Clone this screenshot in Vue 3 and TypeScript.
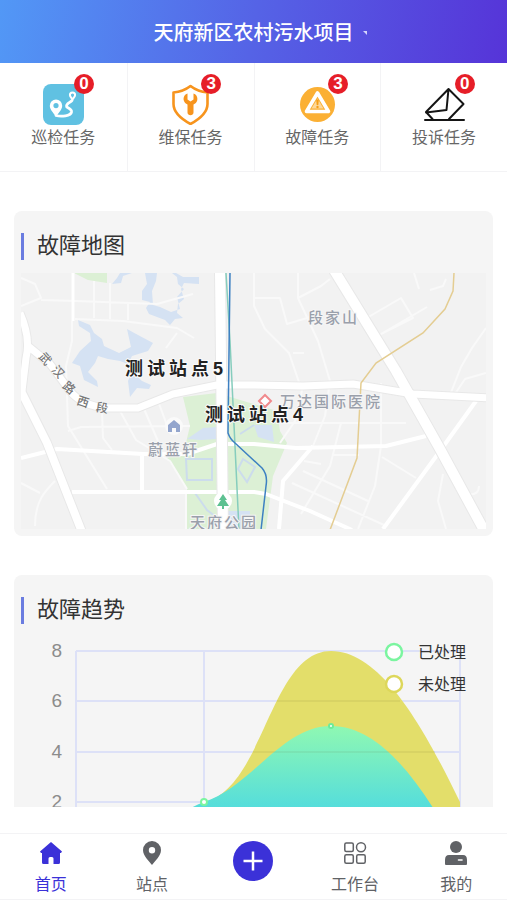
<script setup lang="ts">
import { ref } from 'vue'

type IconName = 'route' | 'repair' | 'warning' | 'mail'

interface Task {
  icon: IconName
  label: string
  count: number
}

interface Tab {
  id: string
  label: string
}

const tasks: Task[] = [
  { icon: 'route', label: '巡检任务', count: 0 },
  { icon: 'repair', label: '维保任务', count: 3 },
  { icon: 'warning', label: '故障任务', count: 3 },
  { icon: 'mail', label: '投诉任务', count: 0 },
]

const tabs: Tab[] = [
  { id: 'home', label: '首页' },
  { id: 'station', label: '站点' },
  { id: 'add', label: '' },
  { id: 'work', label: '工作台' },
  { id: 'mine', label: '我的' },
]

const active = ref('home')

const roadName = [
  { ch: '武', x: 45, y: 358, r: 48 },
  { ch: '汉', x: 58, y: 371, r: 48 },
  { ch: '路', x: 69, y: 387, r: 40 },
  { ch: '西', x: 83, y: 401, r: 18 },
  { ch: '段', x: 102, y: 407, r: 8 },
]

const ticks = [
  { value: 8, y: 650 },
  { value: 6, y: 700 },
  { value: 4, y: 751 },
  { value: 2, y: 801 },
]

const columns = [76, 204, 331, 460]

const legend = [
  { name: '已处理', color: '#7bf5a0', y: 651 },
  { name: '未处理', color: '#ddd75a', y: 683 },
]
</script>

<template>
  <div class="page">
    <header class="header">
      <h1 class="title">天府新区农村污水项目</h1>
      <svg class="caret" width="6" height="6" viewBox="0 0 6 6" aria-hidden="true">
        <path d="M1 1H5V5Z" fill="#d4d4fa" />
      </svg>
    </header>

    <main class="content">
      <nav class="tasks">
        <a v-for="task in tasks" :key="task.label" href="#" class="task">
          <span class="task-icon">
            <svg v-if="task.icon === 'route'" viewBox="0 0 41 41" aria-hidden="true">
              <rect width="41" height="41" rx="8" fill="#60c1e2" />
              <path fill-rule="evenodd" d="M13 15.500a6.200 6.200 0 0 1 6.200 6.200c0 4-3.700 7-6.200 11-2.500-4-6.200-7-6.200-11a6.200 6.200 0 0 1 6.200-6.200ZM13 19a2.600 2.600 0 1 0 0 5.200 2.600 2.600 0 0 0 0-5.200Z" fill="#fff" />
              <path d="M13 31.500c5 1.500 15 .5 15.500-3.500.5-5-8-3.500-4-8 1-1.200 3-2 4.500-3.500" fill="none" stroke="#fff" stroke-width="2.800" stroke-linecap="round" />
              <path d="M29.500 8.500a2.600 2.600 0 0 1 2.600 2.600c0 1.600-1.500 2.800-2.600 4.400-1.100-1.600-2.600-2.800-2.600-4.400a2.600 2.600 0 0 1 2.600-2.600Z" fill="none" stroke="#fff" stroke-width="2" />
            </svg>
            <svg v-else-if="task.icon === 'repair'" viewBox="0 0 41 41" aria-hidden="true">
              <path d="M20.500 2C16 5.500 9.500 8 3.500 8.500V20c0 8 6 14 17 20C31.500 34 37.500 28 37.500 20V8.500C31.500 8 25 5.500 20.500 2Z" fill="none" stroke="#f7941d" stroke-width="2.600" stroke-linejoin="round" />
              <path d="M17.500 9.500C14.500 10.500 13 13.500 13.800 16.500c.5 2 1.900 3.300 3.700 4V28.500c0 3.600 6 3.600 6 0V20.500c1.800-.7 3.200-2 3.700-4 .8-3-.7-6-3.700-7v6L20.500 17.500 17.500 15.500Z" fill="#f7941d" />
            </svg>
            <svg v-else-if="task.icon === 'warning'" viewBox="0 0 41 41" aria-hidden="true">
              <circle cx="20.500" cy="20.500" r="17.500" fill="#fbb034" />
              <path d="M20.500 9 31.500 27.500H9.500Z" fill="none" stroke="#fff" stroke-width="3.600" stroke-linejoin="round" />
              <path d="M20.500 14.500 26.500 24.500H14.500Z" fill="#fff" fill-opacity=".5" />
              <path d="M19.200 15.500h2.600l-.5 5.500h-1.600Z" fill="#f59e16" />
              <circle cx="20.500" cy="23" r="1.200" fill="#f59e16" />
            </svg>
            <svg v-else viewBox="0 0 41 41" aria-hidden="true">
              <path d="M1 36H40M8.500 35 2 28 24.500 5 39.500 20 25 35M2 28.500 22.500 26 24.500 5" fill="none" stroke="#151515" stroke-width="2" stroke-linejoin="round" stroke-linecap="round" />
            </svg>
            <span class="badge">{{ task.count }}</span>
          </span>
          <span>{{ task.label }}</span>
        </a>
      </nav>

      <section class="card">
        <h2 class="card-title">故障地图</h2>
        <svg class="map" viewBox="21 272 465 256" role="img" aria-label="故障地图">
          <rect x="21" y="272" width="465" height="256" fill="#f2f2f2" />

          <g fill="#dcf0d5">
            <path d="M74 272H107V282L88 279Z" />
            <path d="M183 396 217 392 277 410 280 430 287 442 273 475 266 528H187V487L167 457 184 450 190 425Z" />
          </g>
          <g fill="#d5e2f3">
            <path d="M120 272H132L123 275 121 282 112 283 117 277ZM145 272H157L156 280 152 290 153 304 160 306 171 311 180 308 177 296 184 288 178 283 177 276 172 272H176L183 276 199 276V283L184 282 181 288 184 298 178 303 177 312 183 317 175 318 170 324 165 319 149 313 146 307 150 301 142 299V290L147 283Z" />
            <path d="M78 319 90 324 94 332 102 338 104 345 119 352 131 346 127 328 138 334 153 342 148 350 132 355 128 363 120 360 108 358 98 355 95 362 88 371 97 380 98 386 84 379 80 365 72 362 80 350 91 340 90 332 79 325Z" />
            <path d="M132 371 142 380 151 384 149 388 137 387 130 396 128 380Z" />
            <path d="M187 438 203 427 217 426V438L201 439ZM227 510H250V528H227ZM254 424H272L274 441 258 436Z" />
          </g>
          <path d="M186 458H212V479H187ZM195 492 207 509 216 516M243 458 255 466 247 481 238 468ZM240 433 254 424" fill="none" stroke="#ccdcec" stroke-width="2" />

          <!-- minor streets -->
          <g fill="none" stroke="#f9f9f9" stroke-width="2" stroke-linejoin="round">
            <path d="M21 277 35 283 41 297 21 305M41 299 76 300 157 303 193 293M94 280V317M110 282V318M128 303V319M75 318 123 320 177 327 194 337M177 332 166 347" />
            <path d="M72 320V340L66 365 68 425 107 488M68 430 81 426 190 425M102 410 103 437 112 449M120 410 136 439 170 460 187 488M144 408 158 440M158 400 168 427M186 490V528M35 525C35 500 45 490 55 480M21 482 40 492" />
            <path d="M254 272V305L265 328 289 352 302 390M298 272V297L318 340 330 380 325 415 313 445M253 297H280L287 323 317 314M298 297 321 285 330 278" />
            <path d="M365 318 401 297 413 317 381 333 427 306M486 327 472 347 461 366M293 352H304M414 272 419 288M430 289 443 285 446 278" />
            <path d="M381 382V445L375 485 358 528M281 422H406M303 385 295 420 280 442M341 422 330 465 301 513M304 460 321 463M332 454H359M303 470 368 500M292 482 384 524M382 456 416 477M461 366 450 394M486 372 465 378 455 393M443 473 438 500 446 528M465 493C477 495 479 490 479 485" />
          </g>
          <g fill="none" stroke="#fff" stroke-width="4" stroke-linejoin="round">
            <path d="M21 457 57 448 143 453H187L217 443H254L296 447 386 445 426 435M72 491H254L266 493 310 510 352 529M142 453V491M313 445 283 480 279 528M476 400 440 450 383 528" />
            <path d="M73 272V320" stroke-width="3" />
          </g>

          <!-- arterial roads -->
          <g fill="none" stroke="#e8e8e8" stroke-linejoin="round">
            <path d="M21 390 47 442 82 531" stroke-width="10" />
            <path d="M20 312Q31 337 26 357L22 390M28 345 50 363 70 390Q82 405 107 407H138L173 393 217 384H254L303 385 353 383 413 393 489 397" stroke-width="9" />
            <path d="M334 269 396 370 440 448 485 531M220 271 223 530" stroke-width="12" />
          </g>
          <g fill="none" stroke="#fff" stroke-linejoin="round">
            <path d="M21 390 47 442 82 531" stroke-width="8" />
            <path d="M20 312Q31 337 26 357L22 390M28 345 50 363 70 390Q82 405 107 407H138L173 393 217 384H254L303 385 353 383 413 393 489 397" stroke-width="7" />
            <path d="M334 269 396 370 440 448 485 531M220 271 223 530" stroke-width="10" />
          </g>

          <path d="M454 272 453 290 445 308 423 332 376 362 361 382 357 457 330 529" fill="none" stroke="#e4cd92" stroke-width="1.500" />
          <path d="M226 272 230 340 239 529" fill="none" stroke="#86cdbd" stroke-width="1.500" />
          <path d="M230 272 228 432Q230 438 235 442L262 467Q268 474 266 485L261 529" fill="none" stroke="#3d80c2" stroke-width="1.500" />

          <!-- places -->
          <circle cx="174" cy="425" r="9" fill="#fafafa" />
          <path d="M168 424 174 419 180 424V431H176V427H172V431H168Z" fill="#93a5cd" />
          <circle cx="223" cy="500" r="9" fill="#fff" />
          <path d="M223 493 227 499H225L229 505H224V508H222V505H217L221 499H219Z" fill="#5dc191" />
          <path d="M265 394 271 400 265 406 259 400Z" fill="#fff" stroke="#f08a8d" stroke-width="2" />

          <g class="road-name">
            <text v-for="c in roadName" :key="c.ch" text-anchor="middle" dy="4" :transform="`translate(${c.x} ${c.y}) rotate(${c.r})`">{{ c.ch }}</text>
          </g>
          <g class="place">
            <text x="308" y="322">段家山</text>
            <text x="280" y="406">万达国际医院</text>
            <text x="148" y="454">蔚蓝轩</text>
            <text x="190" y="527">天府公园</text>
          </g>
          <g class="station">
            <text x="125" y="374">测试站点5</text>
            <text x="205" y="420">测试站点4</text>
          </g>
        </svg>
      </section>

      <section class="card">
        <h2 class="card-title">故障趋势</h2>
        <svg class="chart" viewBox="21 636 465 240" role="img" aria-label="故障趋势">
          <defs>
            <linearGradient id="done" x1="0" y1="725" x2="0" y2="807" gradientUnits="userSpaceOnUse">
              <stop offset="0" stop-color="#8ff8b2" />
              <stop offset="1" stop-color="#55dddb" />
            </linearGradient>
          </defs>
          <g stroke="#dde1f7" stroke-width="2">
            <line v-for="t in ticks" :key="t.value" x1="76" x2="460" :y1="t.y" :y2="t.y" />
            <line v-for="x in columns" :key="x" :x1="x" :x2="x" y1="650" y2="852" />
          </g>
          <path d="M76 852C130 852 170 818 204 801 264 788 270 650 331 650 385 650 430 740 460 801V852Z" fill="#e3de6a" />
          <path d="M76 852C130 852 170 814 204 801 252 785 282 725 331 725 388 725 430 800 460 852Z" fill="url(#done)" />
          <g stroke="#5a5a20" stroke-opacity=".08" stroke-width="2">
            <line x1="277" x2="400" y1="700" y2="700" />
            <line x1="253" x2="435" y1="751" y2="751" />
          </g>
          <g class="tick">
            <text v-for="t in ticks" :key="t.value" x="62" :y="t.y + 6" text-anchor="end">{{ t.value }}</text>
          </g>
          <circle cx="204" cy="801" r="3" fill="#fff" stroke="#7bf5a0" stroke-width="2" />
          <circle cx="331" cy="725" r="2" fill="#fff" stroke="#6deb9b" stroke-width="2" />
          <g v-for="item in legend" :key="item.name" class="legend">
            <circle cx="394" :cy="item.y" r="8" fill="#fff" :stroke="item.color" stroke-width="2.500" />
            <text x="418" :y="item.y + 6">{{ item.name }}</text>
          </g>
        </svg>
      </section>
    </main>

    <nav class="tabbar">
      <button
        v-for="tab in tabs"
        :key="tab.id"
        type="button"
        class="tab"
        :class="{ active: active === tab.id }"
        :aria-label="tab.label || '新增'"
        @click="active = tab.id"
      >
        <svg v-if="tab.id === 'home'" class="tab-icon" viewBox="0 0 24 24" aria-hidden="true">
          <path d="M12 1 23 10.500 22 12H21V21.500Q21 23 19.500 23H14.500V17.500Q14.500 16 13 16H11Q9.500 16 9.500 17.500V23H4.500Q3 23 3 21.500V12H2L1 10.500Z" fill="currentColor" />
        </svg>
        <svg v-else-if="tab.id === 'station'" class="tab-icon" viewBox="0 0 24 24" aria-hidden="true">
          <path fill-rule="evenodd" d="M12 0A9 9 0 0 0 3 9C3 15 9 20 12 24 15 20 21 15 21 9A9 9 0 0 0 12 0ZM12 6A3.200 3.200 0 1 1 12 12.400 3.200 3.200 0 0 1 12 6Z" fill="currentColor" />
        </svg>
        <svg v-else-if="tab.id === 'add'" class="add-icon" viewBox="0 0 40 40" aria-hidden="true">
          <circle cx="20" cy="20" r="20" fill="#3b31d8" />
          <path d="M20 10.500V29.500M10.500 20H29.500" stroke="#fff" stroke-width="2.500" />
        </svg>
        <svg v-else-if="tab.id === 'work'" class="tab-icon" viewBox="0 0 24 24" aria-hidden="true">
          <g fill="none" stroke="currentColor" stroke-width="1.500">
            <rect x="1.800" y="2" width="8.500" height="8.500" rx="1.500" />
            <circle cx="18" cy="6.200" r="4.500" />
            <rect x="1.800" y="13.700" width="8.500" height="8.500" rx="1.500" />
            <rect x="13.700" y="13.700" width="8.500" height="8.500" rx="1.500" />
          </g>
        </svg>
        <svg v-else class="tab-icon" viewBox="0 0 24 24" aria-hidden="true">
          <circle cx="12" cy="6" r="6" fill="currentColor" />
          <path d="M5 14H19Q23 14 23 19V23Q23 24 22 24H2Q1 24 1 23V19Q1 14 5 14Z" fill="currentColor" />
          <path d="M14.500 19H18" stroke="#fff" stroke-width="1.600" stroke-linecap="round" />
        </svg>
        <span v-if="tab.label">{{ tab.label }}</span>
      </button>
    </nav>
  </div>
</template>

<style>
body {
  background: #fff;
}
</style>

<style scoped>
.page {
  display: flex;
  flex-direction: column;
  height: 100vh;
  font-family: "Liberation Sans", "Noto Sans CJK SC", sans-serif;
  color: #333;
}

.header {
  display: flex;
  flex: none;
  align-items: center;
  justify-content: center;
  gap: 8px;
  padding: 18px 0 15px 14px;
  background: linear-gradient(100deg, #5298f6, #5563e6 50%, #5634d8);
}

.title {
  margin: 0;
  font-size: 20px;
  line-height: 30px;
  font-weight: 500;
  color: #fff;
}

.content {
  flex: 1;
  min-height: 0;
  overflow-y: auto;
  scrollbar-width: none;
}

.tasks {
  display: grid;
  grid-template-columns: repeat(4, 1fr);
  border-bottom: 1px solid #f3f3f5;
}

.task {
  display: flex;
  flex-direction: column;
  align-items: center;
  gap: 1px;
  padding: 21px 0;
  font-size: 16px;
  line-height: 24px;
  color: #666;
  text-decoration: none;
}

.task + .task {
  border-left: 1px solid #f3f3f5;
}

.task-icon {
  position: relative;
  width: 41px;
  height: 41px;
}

.task-icon svg {
  display: block;
  width: 100%;
  height: 100%;
}

.badge {
  position: absolute;
  top: -10px;
  right: -10px;
  width: 20px;
  height: 20px;
  border-radius: 50%;
  background: #e61e28;
  color: #fff;
  font-size: 17px;
  line-height: 20px;
  font-weight: 700;
  text-align: center;
}

.card {
  margin: 39px 14px 0;
  padding: 20px 7px 7px;
  border-radius: 8px;
  background: #f5f5f5;
}

.card-title {
  display: flex;
  align-items: center;
  gap: 13px;
  margin: 0 0 12px;
  font-size: 22px;
  line-height: 30px;
  font-weight: 400;
}

.card-title::before {
  content: "";
  width: 3px;
  height: 27px;
  background: #6a7ce0;
}

.map,
.chart {
  display: block;
  width: 100%;
  height: auto;
}

.road-name {
  font-size: 12px;
  font-weight: 500;
  fill: #777;
}

.place {
  font-size: 15px;
  font-weight: 500;
  letter-spacing: 2px;
  fill: #9aa0ab;
  stroke: #f6f6f6;
  stroke-width: 2px;
  paint-order: stroke;
}

.station {
  font-size: 18px;
  font-weight: 700;
  letter-spacing: 4px;
  fill: #222;
  stroke: #fafafa;
  stroke-width: 2px;
  paint-order: stroke;
}

.tick {
  font-size: 19px;
  fill: #8c8c8c;
}

.legend {
  font-size: 16px;
  fill: #333;
}

.tabbar {
  display: grid;
  flex: none;
  grid-template-columns: repeat(5, 1fr);
  margin-top: 26px;
  border-top: 1px solid #f3f3f5;
  border-bottom: 1px solid #f3f3f5;
}

.tab {
  display: flex;
  flex-direction: column;
  align-items: center;
  gap: 8px;
  padding: 7px 0 2px;
  border: 0;
  background: none;
  font: inherit;
  font-size: 16px;
  line-height: 24px;
  color: #606266;
  cursor: pointer;
}

.tab.active {
  color: #3b31d8;
}

.tab-icon {
  width: 24px;
  height: 24px;
}

.add-icon {
  width: 40px;
  height: 40px;
}
</style>
